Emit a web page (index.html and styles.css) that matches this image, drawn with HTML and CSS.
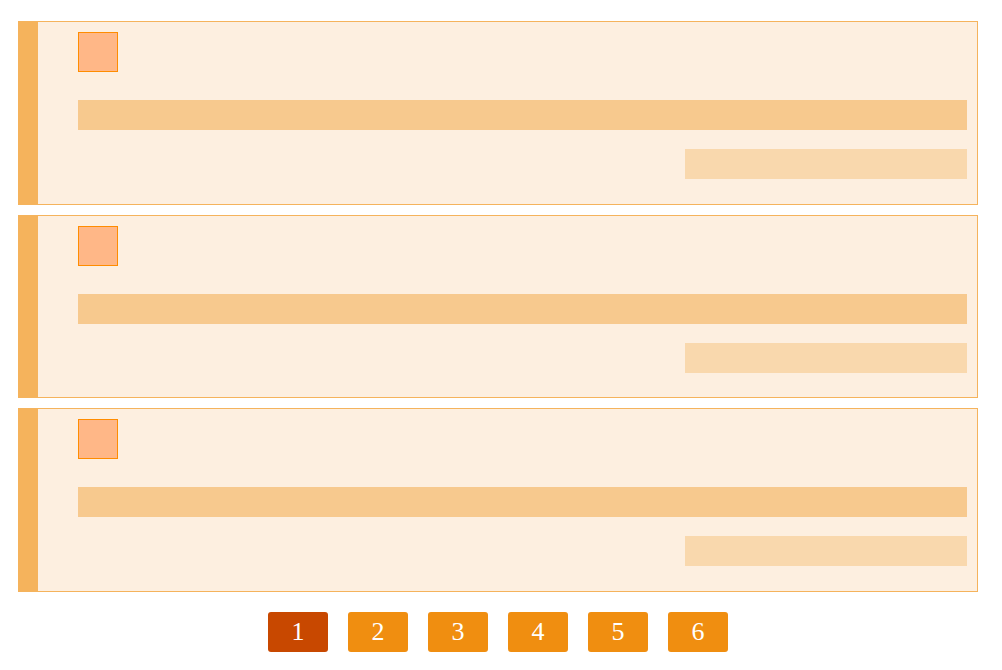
FILE: index.html
```html
<!DOCTYPE html>
<html>
<head>
<meta charset="utf-8">
<link rel="stylesheet" href="styles.css">
</head>
<body>
<div class="wrap">
  <div class="card">
    <div class="thumb"></div>
    <div class="line-main"></div>
    <div class="line-sub"></div>
  </div>
  <div class="card">
    <div class="thumb"></div>
    <div class="line-main"></div>
    <div class="line-sub"></div>
  </div>
  <div class="card">
    <div class="thumb"></div>
    <div class="line-main"></div>
    <div class="line-sub"></div>
  </div>
  <div class="pager">
    <span class="page active">1</span>
    <span class="page">2</span>
    <span class="page">3</span>
    <span class="page">4</span>
    <span class="page">5</span>
    <span class="page">6</span>
  </div>
</div>
</body>
</html>
```
FILE: styles.css
```css
body {
  margin: 0;
  background: #fff;
  font-family: "Liberation Serif", "Times New Roman", serif;
}
.wrap {
  width: 960px;
  padding: 21px 0 0 18px;
  display: flex;
  flex-direction: column;
  gap: 10px;
}
.card {
  background: #fdefe0;
  border: 1px solid #f5b35c;
  border-left: 20px solid #f5b35c;
  padding: 10px 10px 24.5px 40px;
  display: flex;
  flex-direction: column;
}
.thumb {
  width: 38px;
  height: 38px;
  background: #ffb787;
  border: 1px solid #ff8c00;
}
.line-main {
  height: 30px;
  margin-top: 28px;
  background: #f7c98e;
}
.line-sub {
  height: 30px;
  width: 282px;
  margin-top: 19px;
  align-self: flex-end;
  background: #f9d8ad;
}
.pager {
  display: flex;
  justify-content: center;
  gap: 20px;
  margin-top: 10px;
}
.page {
  width: 60px;
  height: 40px;
  border-radius: 3px;
  background: #f08e10;
  color: #fff;
  font-size: 26px;
  display: flex;
  align-items: center;
  justify-content: center;
}
.page.active {
  background: #c84800;
}
```
